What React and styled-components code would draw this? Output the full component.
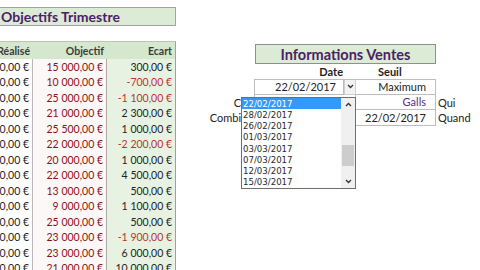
import React from 'react';
import styled, { createGlobalStyle } from 'styled-components'

const GlobalStyle = createGlobalStyle`
  html, body { margin: 0; padding: 0; background: #fff; }
  body { width: 480px; height: 270px; overflow: hidden; font-family: Lato, "Open Sans", sans-serif; }
`

const Page = styled.div`
  display: flex;
  width: 480px;
  height: 270px;
  overflow: hidden;
`

// left sheet block, the first column is cut by the window edge
const LeftPanel = styled.div`
  width: 176px;
  flex: none;
  overflow: hidden;
  display: flex;
  flex-direction: column;
  align-items: flex-end;
  padding-top: 7px;
`

const TitleBox = styled.div`
  box-sizing: border-box;
  width: 176px;
  height: 21px;
  background: #dcebd5;
  border: 1px solid #a3a3a3;
  border-left: none;
  display: flex;
  align-items: center;
  padding-left: 1px;
  font-size: 14px;
  font-weight: 700;
  color: #4a2068;
  white-space: nowrap;
`

const Table = styled.div`
  width: 223px;
  margin-top: 15px;
  display: grid;
  grid-template-columns: 80px 74px 69px;
  font-size: 10.5px;
`

const HeadCell = styled.div`
  height: 18px;
  background: #d5e8cd;
  border-top: 1px solid #b9c8b3;
  border-right: ${p => p.$last ? '1px solid #9aa596' : 'none'};
  box-sizing: border-box;
  display: flex;
  align-items: center;
  justify-content: flex-end;
  padding-right: 3px;
  font-weight: 700;
  color: #3b3b3b;
  white-space: nowrap;
`

const Cell = styled.div`
  height: 15.5px;
  box-sizing: border-box;
  display: flex;
  align-items: center;
  justify-content: flex-end;
  padding-right: 3px;
  white-space: nowrap;
  background: ${p => p.$bg || '#fff'};
  border-right: 1px solid ${p => p.$line || '#c9c9c9'};
  color: ${p => p.$color || '#222'};
`

const RightPanel = styled.div`
  position: relative;
  margin-left: 34px;
  padding-top: 44px;
  display: grid;
  grid-template-columns: 44px 90px 12px 80px 1fr;
  grid-auto-rows: min-content;
  font-size: 11px;
  color: #222;
`

const InfoTitle = styled.div`
  grid-column: 2 / 5;
  box-sizing: border-box;
  height: 20px;
  margin-left: 1px;
  background: #dcebd5;
  border: 1px solid #8f8f8f;
  display: flex;
  align-items: center;
  justify-content: center;
  font-size: 14.5px;
  font-weight: 700;
  color: #4a2068;
`

const ColHead = styled.div`
  grid-column: ${p => p.$span};
  height: 15px;
  display: flex;
  align-items: center;
  justify-content: ${p => p.$align || 'flex-end'};
  padding: 0 ${p => p.$right || 0}px 0 ${p => p.$left || 0}px;
  font-weight: 700;
`

const Label = styled.div`
  height: 15.5px;
  display: flex;
  align-items: center;
  justify-content: flex-end;
  padding-right: 1px;
  white-space: nowrap;
`

const Field = styled.div`
  grid-column: ${p => p.$span || 'auto'};
  box-sizing: border-box;
  height: 15.5px;
  border: 1px solid #bdbdbd;
  border-top: ${p => p.$top ? '1px solid #bdbdbd' : 'none'};
  border-left: ${p => p.$noLeft ? 'none' : '1px solid #bdbdbd'};
  display: flex;
  align-items: center;
  justify-content: flex-end;
  padding-right: ${p => p.$pad || 9}px;
  color: ${p => p.$color || '#222'};
  white-space: nowrap;
`

const DropBtn = styled.div`
  box-sizing: border-box;
  height: 15.5px;
  background: #f2f2f2;
  border: 1px solid #cfcfcf;
  border-top: 1px solid #bdbdbd;
  display: flex;
  align-items: center;
  justify-content: center;
`

const Side = styled.div`
  height: 15.5px;
  display: flex;
  align-items: center;
  padding-left: 2px;
`

const Empty = styled.div``

const ListBox = styled.div`
  position: absolute;
  left: 31px;
  top: 97px;
  width: 115px;
  height: 92px;
  box-sizing: border-box;
  background: #fff;
  border: 1px solid #6e6e6e;
  display: flex;
  font-family: "DejaVu Sans", sans-serif;
  font-size: 8.6px;
  color: #2a2a2a;
`

const Items = styled.div`
  flex: 1;
  display: flex;
  flex-direction: column;
`

const Item = styled.div`
  height: 11.5px;
  display: flex;
  align-items: center;
  padding-left: 1px;
  background: ${p => p.$active ? '#3399ff' : 'transparent'};
  color: ${p => p.$active ? '#fff' : 'inherit'};
`

const Scroll = styled.div`
  width: 14px;
  background: #f0f0f0;
  display: flex;
  flex-direction: column;
`

const Arrow = styled.div`
  height: 13px;
  display: flex;
  align-items: center;
  justify-content: center;
`

const Track = styled.div`
  flex: 1;
  display: flex;
  flex-direction: column;
  padding-top: 34px;
`

const Thumb = styled.div`
  height: 21px;
  margin: 0 1px;
  background: #cdcdcd;
`

const Chevron = ({ up }) => (
  <svg width="7" height="5" viewBox="0 0 7 5">
    <path d={up ? 'M1 4 L3.5 1.5 L6 4' : 'M1 1 L3.5 3.5 L6 1'} fill="none" stroke="#333" strokeWidth="1.3" />
  </svg>
)

const rows = [
  ['15 300,00 €', '15 000,00 €', '300,00 €'],
  ['9 300,00 €', '10 000,00 €', '-700,00 €'],
  ['23 900,00 €', '25 000,00 €', '-1 100,00 €'],
  ['23 300,00 €', '21 000,00 €', '2 300,00 €'],
  ['26 500,00 €', '25 500,00 €', '1 000,00 €'],
  ['19 800,00 €', '22 000,00 €', '-2 200,00 €'],
  ['21 000,00 €', '20 000,00 €', '1 000,00 €'],
  ['26 500,00 €', '22 000,00 €', '4 500,00 €'],
  ['13 500,00 €', '13 000,00 €', '500,00 €'],
  ['10 100,00 €', '9 000,00 €', '1 100,00 €'],
  ['25 500,00 €', '25 000,00 €', '500,00 €'],
  ['21 100,00 €', '23 000,00 €', '-1 900,00 €'],
  ['29 000,00 €', '23 000,00 €', '6 000,00 €'],
  ['31 000,00 €', '21 000,00 €', '10 000,00 €'],
]

const dates = ['22/02/2017', '28/02/2017', '26/02/2017', '01/03/2017', '03/03/2017', '07/03/2017', '12/03/2017', '15/03/2017']

function App() {
  return (
    <React.Fragment>
      <GlobalStyle />
      <Page>
        <LeftPanel>
          <TitleBox>Objectifs Trimestre</TitleBox>
          <Table>
            <HeadCell>Réalisé</HeadCell>
            <HeadCell>Objectif</HeadCell>
            <HeadCell $last>Ecart</HeadCell>
            {rows.map((r, i) => (
              <React.Fragment key={i}>
                <Cell $line="#b8b8b8">{r[0]}</Cell>
                <Cell $bg="#fdf8f8" $line="#b3a7a2" $color="#8e0f14">{r[1]}</Cell>
                <Cell $bg="#e7f2e2" $line="#9aa596" $color={r[2].startsWith('-') ? '#b8352b' : '#222'}>{r[2]}</Cell>
              </React.Fragment>
            ))}
          </Table>
        </LeftPanel>

        <RightPanel>
          <Empty />
          <InfoTitle>Informations Ventes</InfoTitle>
          <Empty />

          <Empty />
          <ColHead $span="2 / 4" $right={13}>Date</ColHead>
          <ColHead $span="4 / 5" $align="flex-start" $left={22}>Seuil</ColHead>
          <Empty />

          <Label />
          <Field $top $pad={7}>22/02/2017</Field>
          <DropBtn><Chevron /></DropBtn>
          <Field $top $noLeft>Maximum</Field>
          <Empty />

          <Label>Cde</Label>
          <Field $span="2 / 4" />
          <Field $noLeft $color="#5b2a7e">Galls</Field>
          <Side>Qui</Side>

          <Label>Combien</Label>
          <Field $span="2 / 4" />
          <Field $noLeft>22/02/2017</Field>
          <Side>Quand</Side>

          <ListBox>
            <Items>
              {dates.map((d, i) => <Item key={d} $active={i === 0}>{d}</Item>)}
            </Items>
            <Scroll>
              <Arrow><Chevron up /></Arrow>
              <Track><Thumb /></Track>
              <Arrow><Chevron /></Arrow>
            </Scroll>
          </ListBox>
        </RightPanel>
      </Page>
    </React.Fragment>
  )
}

export default App;
